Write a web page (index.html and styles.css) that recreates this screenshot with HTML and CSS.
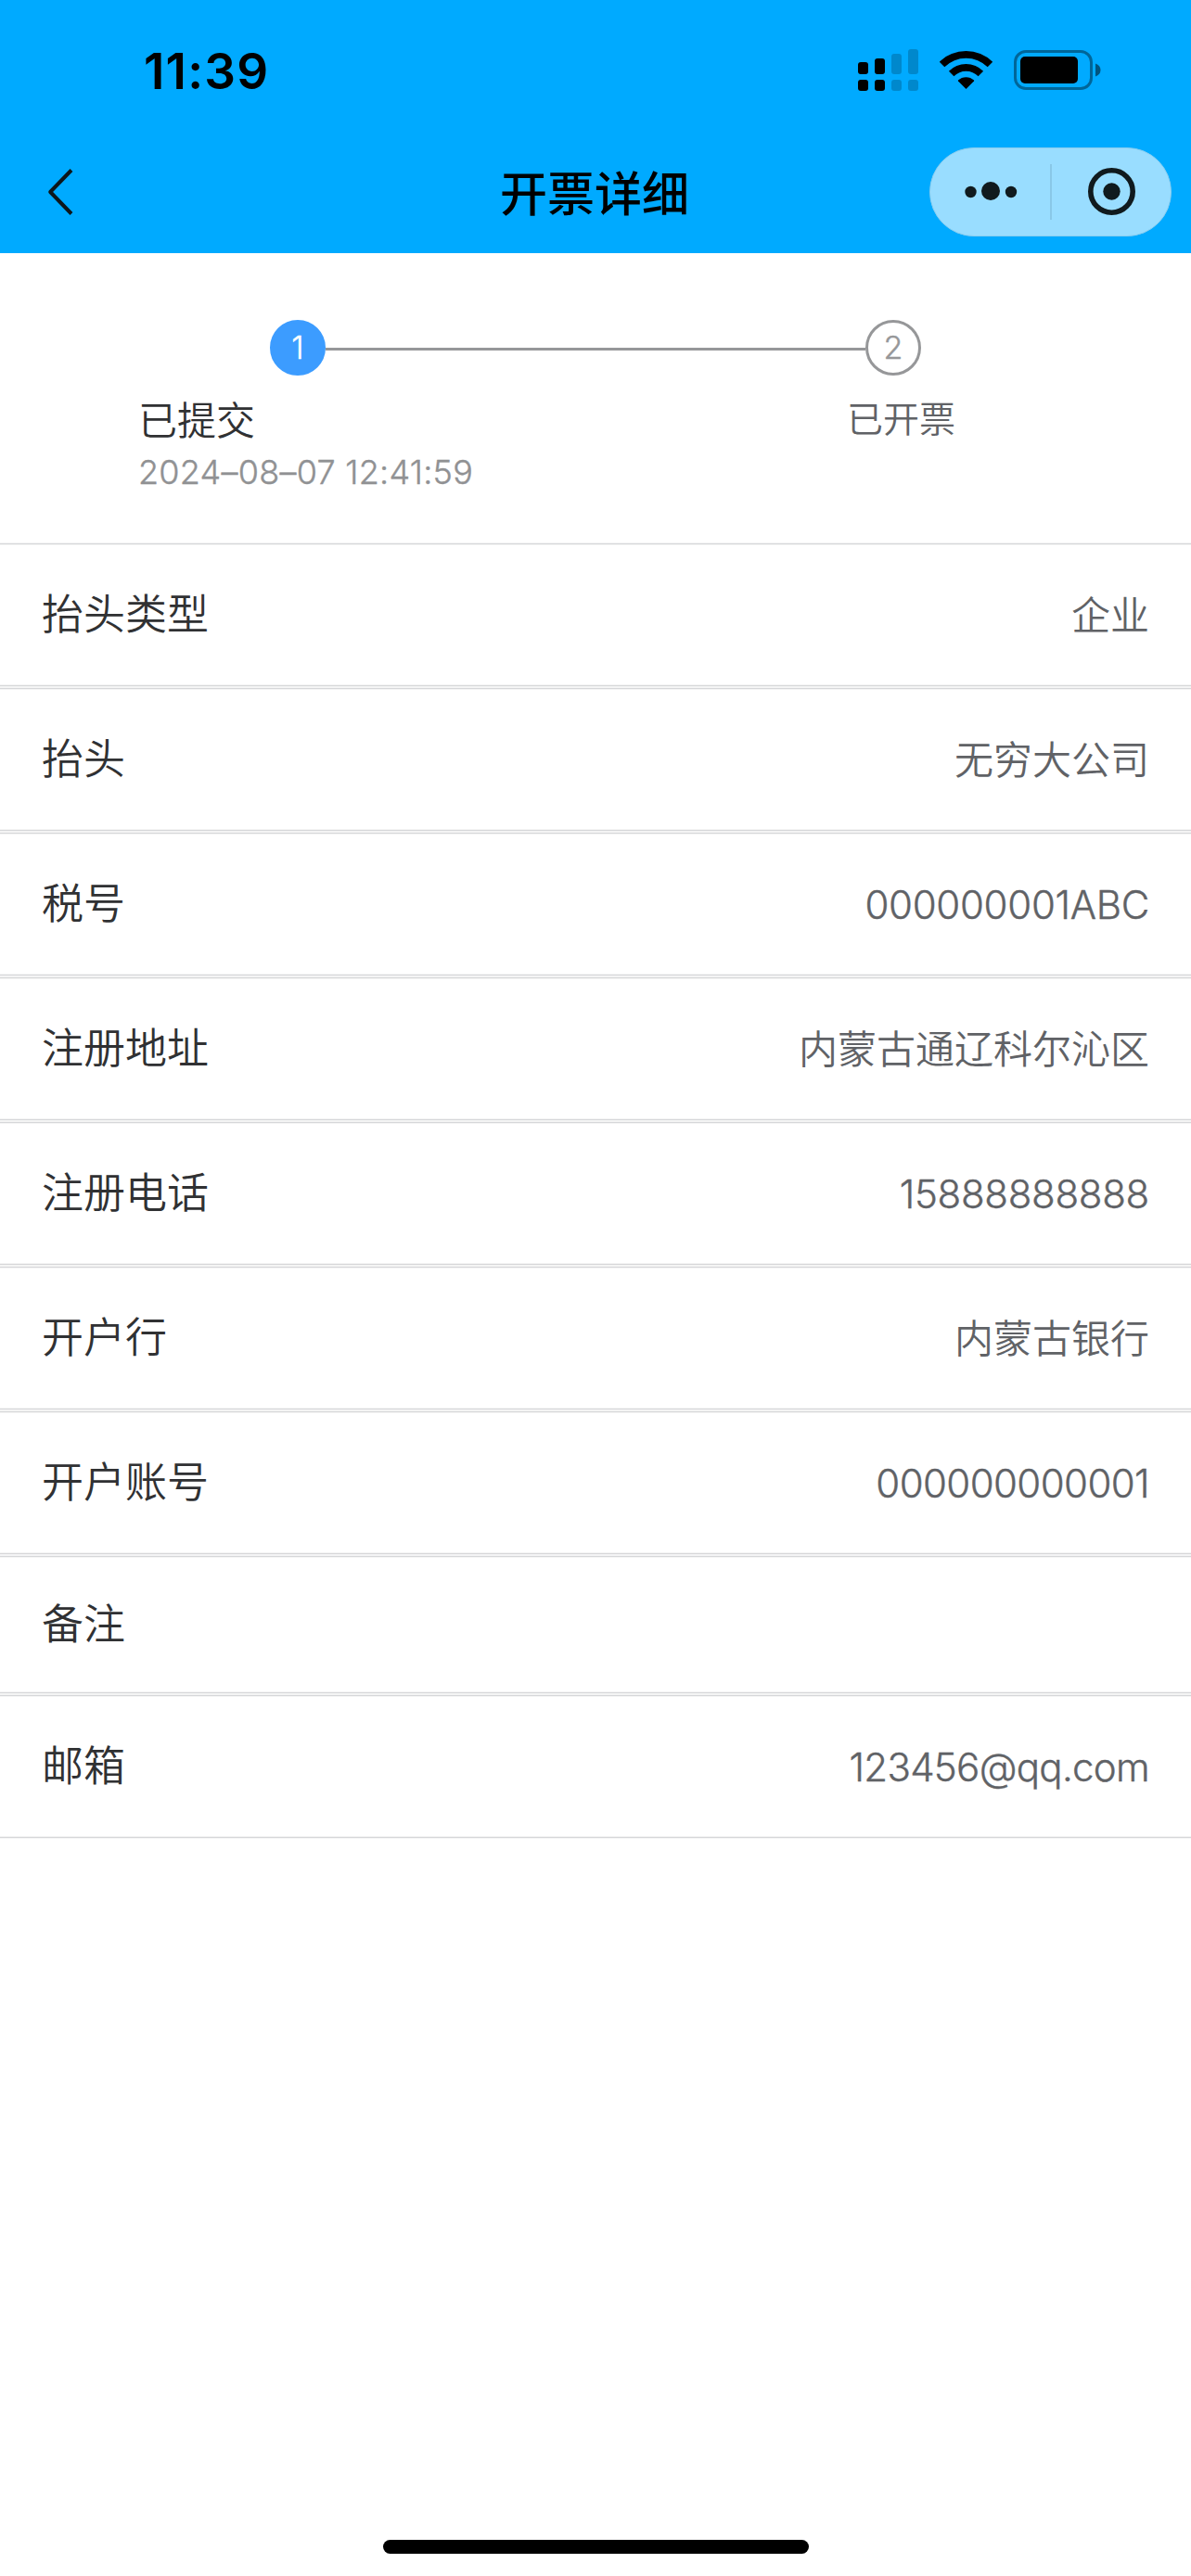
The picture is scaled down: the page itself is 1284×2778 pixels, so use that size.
FILE: index.html
```html
<!DOCTYPE html>
<html lang="zh-CN">
<head>
<meta charset="utf-8">
<title>开票详细</title>
<link rel="stylesheet" href="styles.css">
</head>
<body>
<header class="header">
  <div class="status">
    <span class="time">11:39</span>
    <svg class="status-icons" width="320" height="90" viewBox="0 0 320 90">
      <g><rect x="25" y="37" width="11" height="13" rx="3"/><rect x="43" y="33" width="11" height="17" rx="3"/><rect x="25" y="56" width="11" height="12" rx="3"/><rect x="43" y="56" width="11" height="12" rx="3"/></g>
      <g fill-opacity=".2"><rect x="61" y="28" width="11" height="22" rx="3"/><rect x="79" y="23" width="11" height="27" rx="3"/><rect x="61" y="56" width="11" height="12" rx="3"/><rect x="79" y="56" width="11" height="12" rx="3"/></g>
      <path d="M141.500 66 L133 57.500 Q132.600 57 133 56.600 A12.300 12.300 0 0 1 150 56.600 Q150.400 57 150 57.500 Z"/>
      <path d="M122.900 46.700 A26.300 26.300 0 0 1 160.100 46.700 L154.600 52.200 A18.500 18.500 0 0 0 128.400 52.200 Z"/>
      <path d="M112.800 36.800 A41 41 0 0 1 170.200 36.800 L164.700 42.300 A33 33 0 0 0 118.300 42.300 Z"/>
      <rect x="194.500" y="25.500" width="82" height="40" rx="11.500" fill="none" stroke="#000" stroke-opacity=".4" stroke-width="3"/>
      <rect x="200" y="31" width="62" height="29" rx="5"/>
      <path d="M281 38.500 Q286.500 40.500 286.500 45.500 T281 52.500 Z" fill-opacity=".5"/>
    </svg>
  </div>
  <div class="nav">
    <svg class="back" width="30" height="54" viewBox="0 0 30 54"><path d="M27 3.500 L4.200 27 L27 50.500" fill="none" stroke="#0d161b" stroke-width="4" stroke-linejoin="round"/></svg>
    <h1 class="title">开票详细</h1>
    <svg class="capsule" width="262" height="97" viewBox="0 0 262 97">
      <rect x=".5" y=".5" width="260" height="95" rx="47.500" fill="#9df" stroke="#8acdef"/>
      <g fill="#101a1e"><circle cx="44.500" cy="48" r="6.200"/><circle cx="66" cy="47" r="10"/><circle cx="88" cy="48" r="6.200"/><circle cx="196.500" cy="47.500" r="9.200"/></g>
      <path d="M131 18 V78" stroke="#89c8e8" stroke-width="2"/>
      <circle cx="196.500" cy="47.500" r="22.700" fill="none" stroke="#101a1e" stroke-width="5.600"/>
    </svg>
  </div>
</header>
<main>
  <section class="steps">
    <div class="track"><span class="dot active">1</span><span class="line"></span><span class="dot">2</span></div>
    <div class="captions">
      <div class="caption current"><div>已提交</div><div class="date">2024–08–07 12:41:59</div></div>
      <div class="caption">已开票</div>
    </div>
  </section>
  <dl class="list">
    <div class="row"><dt>抬头类型</dt><dd>企业</dd></div>
    <div class="row"><dt>抬头</dt><dd>无穷大公司</dd></div>
    <div class="row"><dt>税号</dt><dd class="num">000000001ABC</dd></div>
    <div class="row"><dt>注册地址</dt><dd>内蒙古通辽科尔沁区</dd></div>
    <div class="row"><dt>注册电话</dt><dd class="num">15888888888</dd></div>
    <div class="row"><dt>开户行</dt><dd>内蒙古银行</dd></div>
    <div class="row"><dt>开户账号</dt><dd class="num account">000000000001</dd></div>
    <div class="row empty"><dt>备注</dt><dd></dd></div>
    <div class="row"><dt>邮箱</dt><dd class="num email">123456@qq.com</dd></div>
  </dl>
</main>
<div class="home"></div>
</body>
</html>
```
FILE: styles.css
```css
* { box-sizing: border-box; }
body {
  margin: 0;
  height: 2778px;
  display: flex;
  flex-direction: column;
  background: #fff;
  color: #303133;
  font-family: Inter, "Noto Sans CJK SC", sans-serif;
}
.header { height: 273px; background: #0af; flex: none; }
.status { height: 120px; padding: 30px 64px 0 155px; display: flex; justify-content: space-between; }
.time { font-size: 53px; font-weight: 600; line-height: 94px; color: #000; letter-spacing: 1.2px; }
.status-icons { display: block; }
.nav { height: 153px; padding: 0 20px 0 50px; display: grid; grid-template-columns: 262px 1fr 262px; align-items: center; }
.back { margin-top: 21px; }
.title { margin: 26px 0 0; padding-right: 32px; text-align: center; font-size: 51px; line-height: 70px; font-weight: 500; color: #000; }
.capsule { margin-top: 22px; }
.steps { height: 312px; padding-top: 72px; }
.track { display: flex; align-items: center; padding: 0 291px; }
.dot { width: 60px; height: 60px; border: 3px solid #969799; border-radius: 50%; color: #969799; font-size: 34px; line-height: 53px; font-weight: 300; text-align: center; -webkit-text-stroke: 0.4px; }
.dot.active { border-color: #3c9cff; background: #3c9cff; color: #fff; }
.line { flex: 1; height: 3px; margin-top: 3px; background: #969799; }
.captions { display: flex; justify-content: space-between; padding: 20px 254px 0 149px; }
.caption { font-size: 39px; line-height: 54px; font-weight: 350; color: #606266; }
.caption.current { font-size: 42px; line-height: 58px; color: #303133; }
.date { font-size: 36px; line-height: 53px; font-weight: 350; color: #909193; letter-spacing: 0.25px; -webkit-text-stroke: 0.4px; }
.list { margin: 0; }
/* Each rule is a hairline with a faint edge on both sides. */
.row {
  height: 156px;
  padding: 0 45px;
  display: flex;
  justify-content: space-between;
  align-items: center;
  background:
    linear-gradient(#d6d7d9, #d6d7d9) 0 1px / 100% 1px no-repeat,
    linear-gradient(#d6d7d9, #d6d7d9) 0 calc(100% - 1px) / 100% 1px no-repeat,
    linear-gradient(#f4f4f4, #f4f4f4) 0 0 / 100% 3px no-repeat,
    linear-gradient(#f4f4f4, #f4f4f4) 0 100% / 100% 3px no-repeat;
}
.row.empty { height: 150px; }
.row dt { padding-bottom: 7px; font-size: 45px; font-weight: 350; }
.row dd { margin: 0; padding-bottom: 6px; font-size: 42px; font-weight: 350; color: #606266; }
.row dd.num { padding-bottom: 0; letter-spacing: -0.3px; -webkit-text-stroke: 0.4px; }
.row dd.account { letter-spacing: -0.6px; }
.row dd.email { letter-spacing: -0.7px; }
.home { width: 459px; height: 15px; margin: auto auto 24px; border-radius: 8px; background: #000; }
```
